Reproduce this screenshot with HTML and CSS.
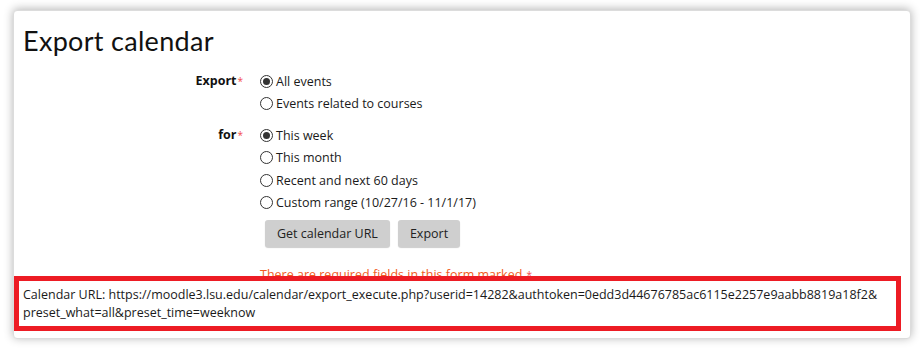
FILE: index.html
```html
<!DOCTYPE html>
<html>
<head>
<meta charset="utf-8">
<link rel="stylesheet" href="styles.css">
</head>
<body>
<div class="page">
  <div class="card">
    <h2 class="title">Export calendar</h2>
    <div class="form">
      <div class="label">Export<span class="req">*</span></div>
      <div class="options">
        <div class="opt"><span class="radio checked"></span>All events</div>
        <div class="opt"><span class="radio"></span>Events related to courses</div>
      </div>
      <div class="label">for<span class="req">*</span></div>
      <div class="options">
        <div class="opt"><span class="radio checked"></span>This week</div>
        <div class="opt"><span class="radio"></span>This month</div>
        <div class="opt"><span class="radio"></span>Recent and next 60 days</div>
        <div class="opt"><span class="radio"></span>Custom range (10/27/16 - 11/1/17)</div>
      </div>
      <div class="label"></div>
      <div class="buttons">
        <button class="btn">Get calendar URL</button>
        <button class="btn">Export</button>
      </div>
      <div class="label"></div>
      <div class="required">There are required fields in this form marked <span class="req">*</span></div>
    </div>
  </div>
  <div class="highlight">Calendar URL: https://moodle3.lsu.edu/calendar/export_execute.php?userid=14282&amp;authtoken=0edd3d44676785ac6115e2257e9aabb8819a18f2&amp;<br>preset_what=all&amp;preset_time=weeknow</div>
</div>
</body>
</html>
```
FILE: styles.css
```css
html, body {
  margin: 0;
  padding: 0;
  background: #ffffff;
}
body {
  font-family: "Open Sans", "Liberation Sans", sans-serif;
  font-size: 12.5px;
  color: #1a1a1a;
}
.page {
  position: relative;
  width: 920px;
  height: 348px;
  overflow: hidden;
  padding-top: 10px;
  box-sizing: border-box;
}
.card {
  margin-left: 13px;
  width: 898px;
  height: 329px;
  box-sizing: border-box;
  border: 1px solid #dcdcdc;
  border-radius: 4px;
  background: #fff;
  box-shadow: 0 -1px 10px rgba(0, 0, 0, 0.3);
  padding: 15px 9px 0 9px;
}
.title {
  margin: 0 0 14px 0;
  font-family: "Lato", "Open Sans", sans-serif;
  font-weight: 400;
  font-size: 27px;
  letter-spacing: 0.3px;
  line-height: 30px;
  color: #111;
}
.form {
  display: grid;
  grid-template-columns: 220px 1fr;
  column-gap: 17px;
}
.label {
  text-align: right;
  font-weight: 700;
  line-height: 22.5px;
  color: #111;
}
.req {
  color: #f24a4a;
  font-weight: 400;
  font-size: 10px;
  vertical-align: top;
  margin-left: 1px;
}
.options {
  margin-bottom: 8.75px;
}
.opt {
  display: flex;
  align-items: center;
  height: 22.5px;
}
.radio {
  width: 11px;
  height: 11px;
  border: 1px solid #333;
  border-radius: 50%;
  margin-right: 3px;
  display: inline-flex;
  align-items: center;
  justify-content: center;
  box-sizing: content-box;
}
.radio.checked::after {
  content: "";
  width: 7px;
  height: 7px;
  border-radius: 50%;
  background: #333;
}
.buttons {
  display: flex;
  gap: 8px;
  padding-left: 5px;
  margin-top: -2.5px;
}
.btn {
  font-family: "Open Sans", "Liberation Sans", sans-serif;
  font-size: 12.5px;
  color: #222;
  background: #cfcfcf;
  border: none;
  border-radius: 3px;
  height: 27px;
  padding: 0 12px;
  box-shadow: 0 1px 1px rgba(0, 0, 0, 0.2);
}
.required {
  margin-top: 19px;
  color: #f25a22;
  line-height: 18px;
}
.required .req {
  color: #f24a4a;
}
.highlight {
  position: absolute;
  left: 14px;
  top: 276px;
  width: 887px;
  height: 55px;
  box-sizing: border-box;
  border: 5px solid #ed1c24;
  background: #fff;
  padding: 5px 0 0 4px;
  line-height: 18px;
  color: #1a1a1a;
  white-space: nowrap;
}
```
